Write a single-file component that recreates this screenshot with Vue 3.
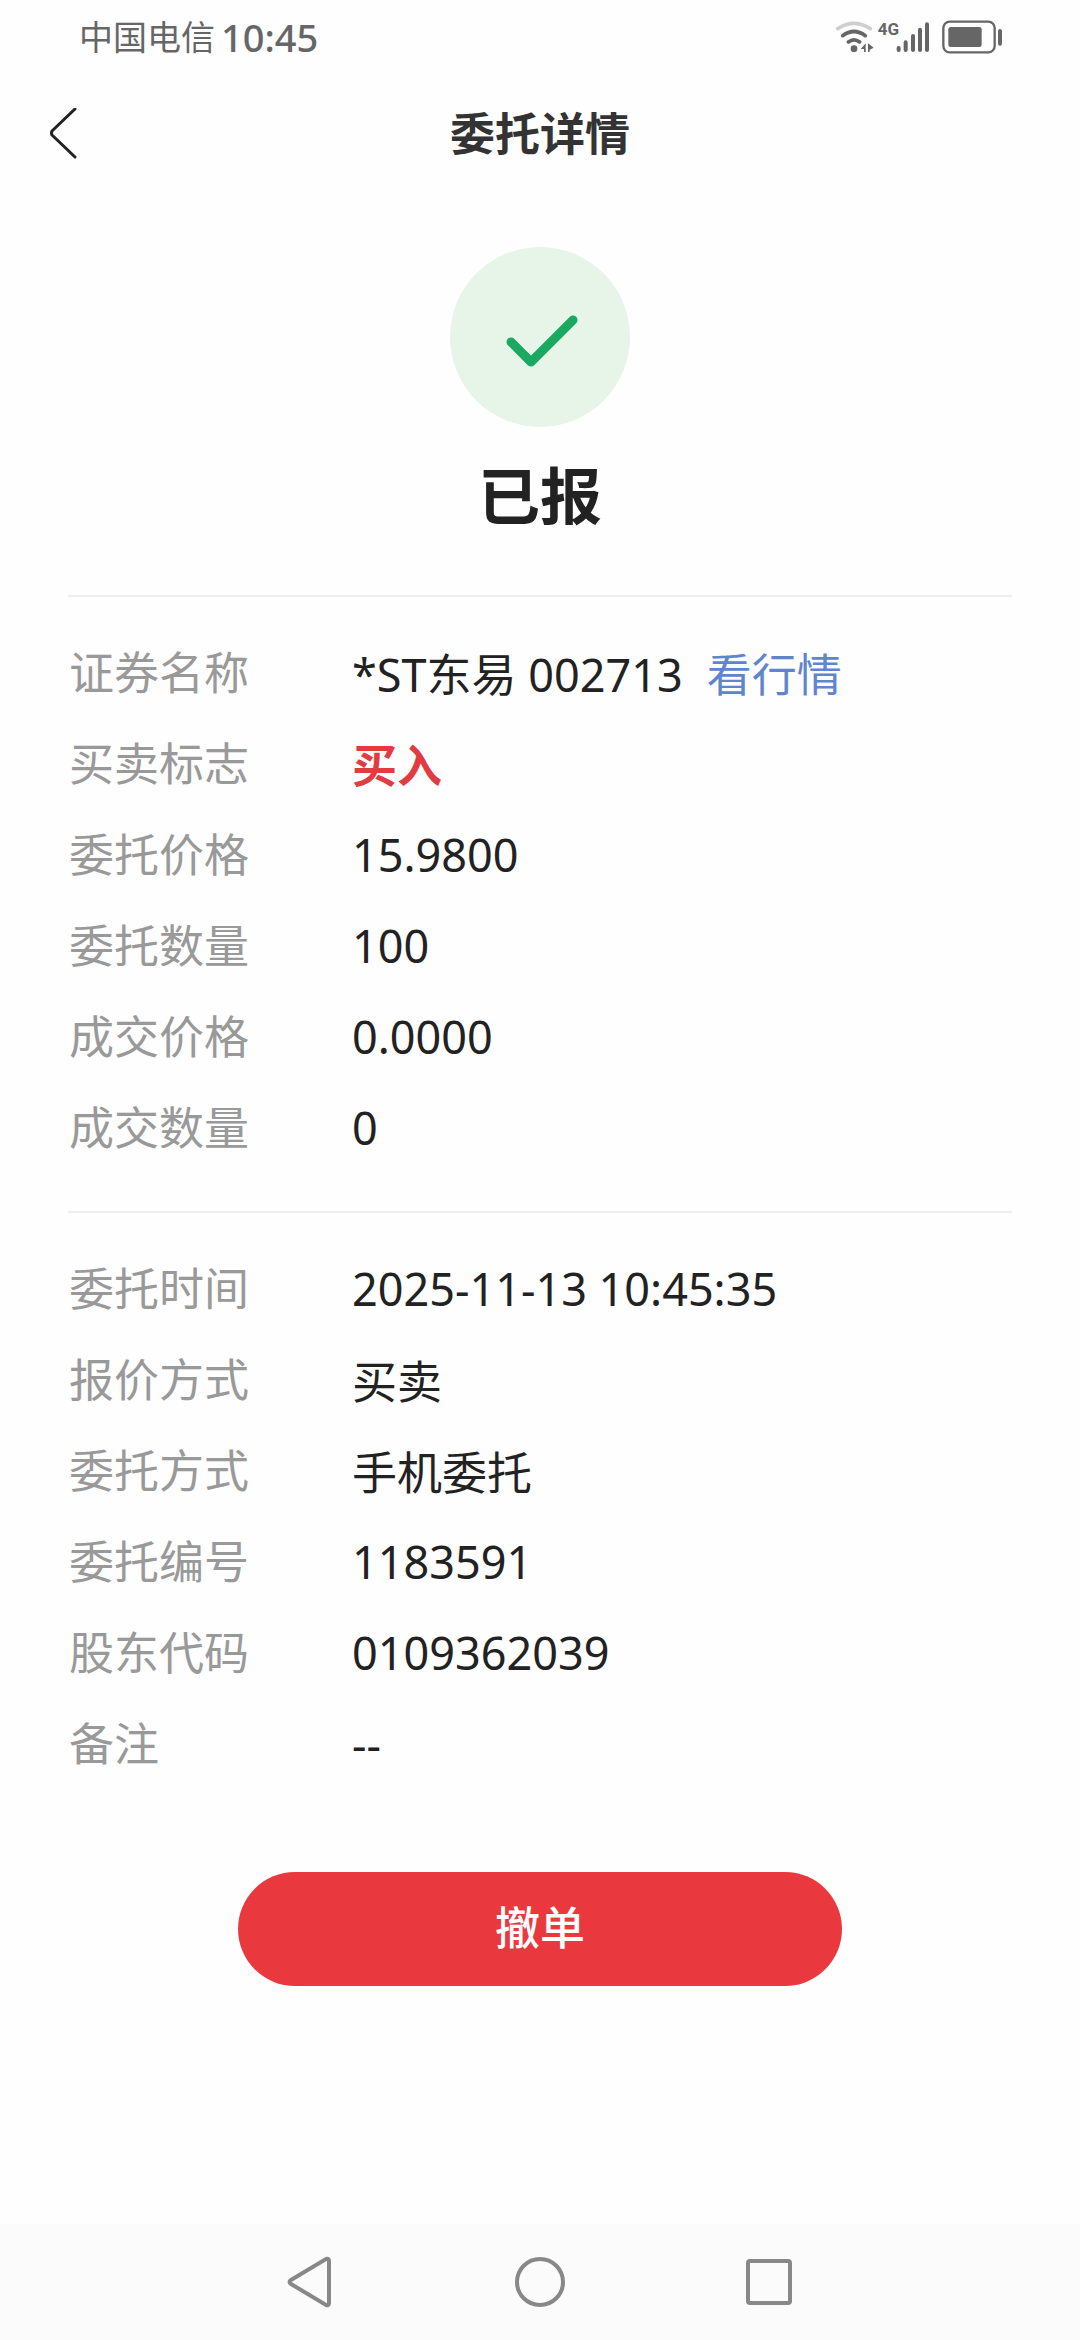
<script setup>
const orderRows = [
  { label: '证券名称', value: '*ST东易 002713', link: '看行情' },
  { label: '买卖标志', value: '买入', buy: true },
  { label: '委托价格', value: '15.9800' },
  { label: '委托数量', value: '100' },
  { label: '成交价格', value: '0.0000' },
  { label: '成交数量', value: '0' },
]
const extraRows = [
  { label: '委托时间', value: '2025-11-13 10:45:35' },
  { label: '报价方式', value: '买卖' },
  { label: '委托方式', value: '手机委托' },
  { label: '委托编号', value: '1183591' },
  { label: '股东代码', value: '0109362039' },
  { label: '备注', value: '--' },
]
const groups = [orderRows, extraRows]
</script>

<template>
  <div class="page">
    <div class="status-bar">
      <span class="carrier">中国电信</span>
      <span class="clock">10:45</span>
      <div class="indicators">
        <svg class="wifi" width="40" height="32" viewBox="0 0 120 96" fill="none">
          <g stroke-width="11" stroke-linecap="round">
            <path d="M8 23Q57 -9 106 23" stroke="#cfcfcf" />
            <path d="M23 44Q57 19 91 44" stroke="#666" />
            <path d="M40 63Q57 50 74 63" stroke="#666" />
          </g>
          <circle cx="57" cy="83" r="10" fill="#666" />
          <path d="M92 67v26h-5v-9h-10zM99 67l17 13l-12 6v7h-5z" fill="#666" />
        </svg>
        <span class="network">4G</span>
        <svg width="34" height="32" viewBox="0 0 102 96" stroke="#666" stroke-width="12" stroke-linecap="round">
          <path d="M8 81v6M29 64v23M51 45v42M72 26v61M93 10v77" />
        </svg>
        <svg class="battery" width="61" height="34" viewBox="0 0 183 102" fill="none">
          <rect x="4" y="5" width="154" height="92" rx="19" stroke="#666" stroke-width="7" />
          <rect x="19" y="21" width="100" height="60" rx="7" fill="#666" />
          <rect x="168" y="27" width="12" height="50" rx="6" fill="#666" />
        </svg>
      </div>
    </div>

    <header class="title-bar">
      <button class="back" type="button" aria-label="返回">
        <svg width="28" height="52" viewBox="0 0 28 52" fill="none" stroke="#222" stroke-width="3" stroke-linecap="round" stroke-linejoin="round">
          <path d="M25 1L2 23Q1 25 2 27L25 49" />
        </svg>
      </button>
      <h1>委托详情</h1>
    </header>

    <main>
      <div class="result">
        <svg width="180" height="180" viewBox="0 0 180 180" fill="none">
          <circle cx="90" cy="90" r="90" fill="#e7f5e9" />
          <path d="M61 95L81 115L123 73" stroke="#1ba860" stroke-width="9" stroke-linecap="round" stroke-linejoin="round" />
        </svg>
        <h2>已报</h2>
      </div>

      <dl v-for="(rows, i) in groups" :key="i" class="group">
        <div v-for="row in rows" :key="row.label" class="row">
          <dt>{{ row.label }}</dt>
          <dd>
            <span :class="{ buy: row.buy }">{{ row.value }}</span>
            <a v-if="row.link" href="#">{{ row.link }}</a>
          </dd>
        </div>
      </dl>

      <button class="cancel" type="button">撤单</button>
    </main>

    <nav class="system-nav">
      <button type="button" aria-label="后退">
        <svg width="52" height="52" viewBox="0 0 52 52">
          <path d="M6 24Q3 26 6 28L41 49Q44 50 44 47V5Q44 2 41 3Z" />
        </svg>
      </button>
      <button type="button" aria-label="主屏幕">
        <svg width="52" height="52" viewBox="0 0 52 52"><circle cx="26" cy="26" r="23" /></svg>
      </button>
      <button type="button" aria-label="最近任务">
        <svg width="52" height="52" viewBox="0 0 52 52"><rect x="5" y="5" width="42" height="42" rx="2" /></svg>
      </button>
    </nav>
  </div>
</template>

<style>
body {
  margin: 0;
  background: #fefefe;
}
</style>

<style scoped>
.page {
  display: flex;
  flex-direction: column;
  min-height: 100vh;
  color: #222;
  font-family: "Noto Sans", "Noto Sans CJK SC", sans-serif;
  font-size: 45px;
}
button {
  padding: 0;
  border: 0;
  background: none;
  font: inherit;
}
svg {
  display: block;
}
.status-bar {
  display: flex;
  align-items: center;
  height: 74px;
  padding: 0 77px 0 79px;
  color: #666;
}
.carrier {
  font-size: 34px;
  line-height: 48px;
}
.clock {
  margin-left: 6px;
  font-size: 38px;
  line-height: 48px;
  font-weight: 500;
}
.indicators {
  display: flex;
  align-items: center;
  margin-left: auto;
}
.network {
  align-self: flex-start;
  margin: 0 -3px 0 3px;
  font: bold 17px/18px Roboto, sans-serif;
}
.battery {
  margin-left: 12px;
}
.title-bar {
  display: grid;
  grid-template-columns: 1fr auto 1fr;
  align-items: center;
  height: 120px;
  padding: 0 50px;
}
.back {
  justify-self: start;
}
h1 {
  margin: 0;
  color: #333;
  font-size: 45px;
  line-height: 60px;
  font-weight: 700;
}
main {
  display: flex;
  flex-direction: column;
  padding: 53px 68px 60px;
}
.result {
  display: flex;
  flex-direction: column;
  align-items: center;
  padding-bottom: 59px;
}
h2 {
  margin: 29px 0 0;
  font-size: 62px;
  line-height: 80px;
  font-weight: 700;
}
.group {
  margin: 0;
  padding: 30px 0 38px;
  border-top: 2px solid #eee;
}
.row {
  display: flex;
  align-items: center;
  height: 91px;
}
dt {
  flex: none;
  box-sizing: border-box;
  width: 284px;
  padding: 0 0 4px 1px;
  color: #999;
}
dd {
  display: flex;
  gap: 24px;
  margin: 0;
}
.buy {
  color: #e13c41;
  font-weight: 700;
}
a {
  color: #5f86cc;
  text-decoration: none;
}
.cancel {
  align-self: center;
  width: 64%;
  height: 114px;
  margin-top: 45px;
  padding-bottom: 8px;
  border-radius: 57px;
  background: #e9393f;
  color: #fff;
  font-weight: 500;
}
.system-nav {
  display: flex;
  justify-content: center;
  align-items: center;
  gap: 177px;
  height: 116px;
  margin-top: auto;
  background: #fbfbfb;
}
.system-nav svg {
  fill: none;
  stroke: #888;
  stroke-width: 4;
}
</style>
